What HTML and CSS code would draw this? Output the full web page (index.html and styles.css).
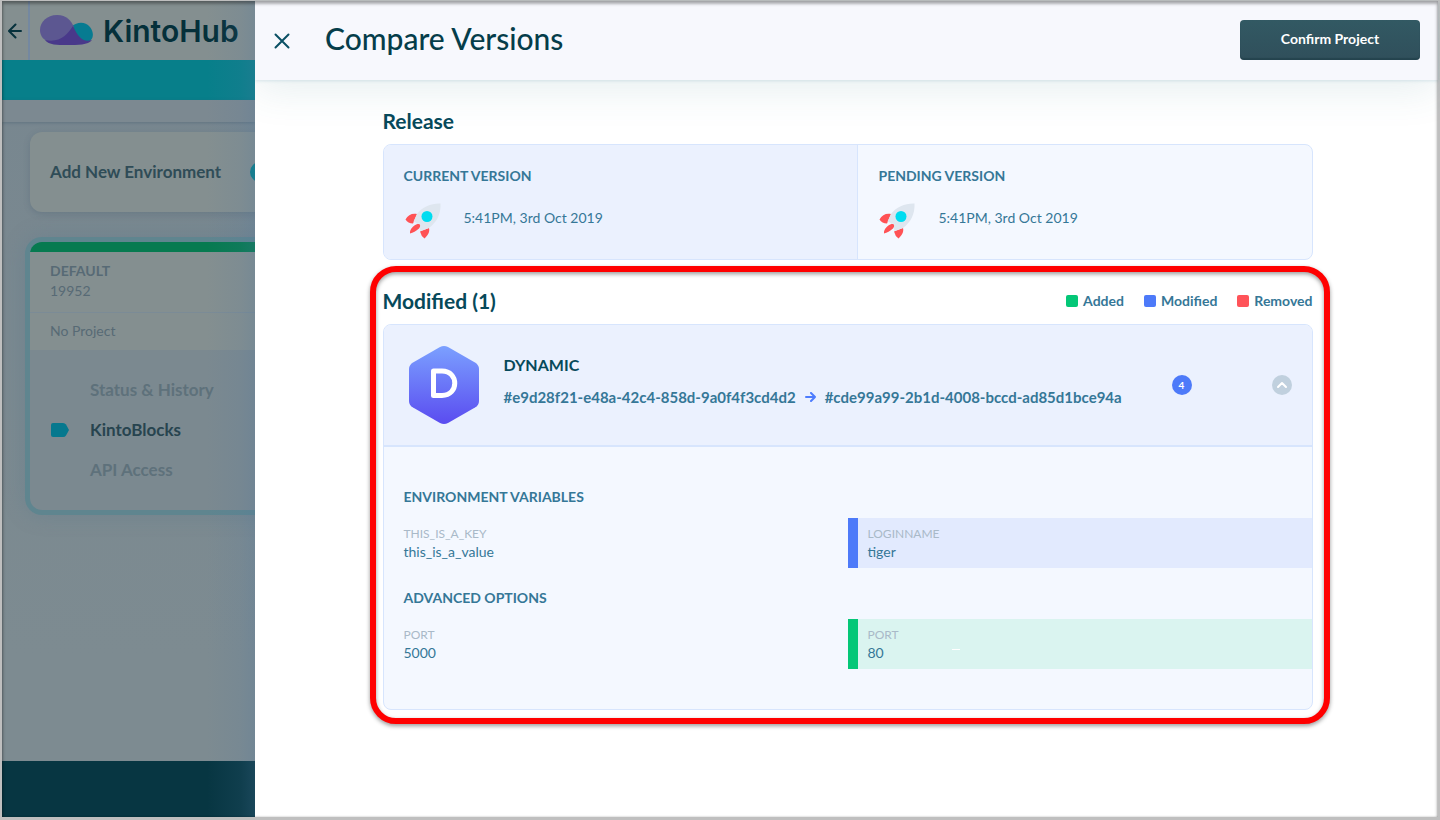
FILE: index.html
```html
<!DOCTYPE html>
<html lang="en">
<head>
<meta charset="utf-8">
<meta name="viewport" content="width=device-width, initial-scale=1">
<title>KintoHub - Compare Versions</title>
<link rel="stylesheet" href="styles.css">
</head>
<body>
<svg class="sprite" aria-hidden="true">
  <symbol id="rocket" viewBox="0 0 40 40">
    <path fill="#ff5255" d="M13 15C8 14 4 16 1.500 20.500Q4 24.500 9 24.500ZM25 29C26 33 24 36 20.500 39.500Q17 37 16 32.500ZM6 34.500C5.500 30 10 26 13.500 25C17 24.500 17 27.500 15 29.500C12 32 9 34 6 34.500Z"/>
    <path fill="#dee6ef" d="M36.500 4.500C28 4 18 8 13 15L9.500 22.500C11.500 23 12.500 24 13.500 25C16 24 17.500 26.500 15.500 29C16 30 16.500 31 16.500 32L25 29C33 23 37 15 36.500 4.500Z"/>
    <circle cx="23" cy="17.500" r="5.500" fill="#00dcf0"/>
  </symbol>
</svg>
<div class="window">
  <div class="app">
    <header class="topbar">
      <button class="back" aria-label="Back">
        <svg width="14" height="16" viewBox="0 0 14 16"><path d="M13 8H1.500M7.500 1.500L1 8l6.500 6.500" fill="none" stroke="currentColor" stroke-width="2" stroke-linecap="round" stroke-linejoin="round"/></svg>
      </button>
      <a class="brand" href="#">
        <svg width="54" height="31" viewBox="0 0 54 31" aria-hidden="true">
          <path fill="#077b91" d="M32 11C37 7 45 6 50 12C55 19 53 25 48 27Q40 31 30 22Z"/>
          <path fill="#5c5791" d="M17 0C27 0 31 6 34 12C29 20 22 27 10 27C4 26 0 21 0 15C0 7 7 0 17 0Z"/>
          <path fill="#49398a" d="M5 25C20 28 27 20 33 11C38 22 43 28 52 25C48 30 38 30 27 30C17 30 9 30 5 25Z"/>
        </svg>
        <span>KintoHub</span>
      </a>
    </header>
    <div class="band"></div>
    <div class="strip"></div>
    <main class="side">
      <button class="add-card"><span>Add New Environment</span><i class="add-dot"></i></button>
      <section class="env">
        <div class="env-info"><strong>DEFAULT</strong><span>19952</span></div>
        <div class="env-project">No Project</div>
        <nav class="env-nav">
          <a href="#">Status &amp; History</a>
          <a href="#" class="active"><svg width="18" height="14" viewBox="0 0 18 14" aria-hidden="true"><path fill="#06788e" d="M2 0H12Q14 0 15 1.500L18 7L15 12.500Q14 14 12 14H2Q0 14 0 12V2Q0 0 2 0Z"/></svg>KintoBlocks</a>
          <a href="#">API Access</a>
        </nav>
      </section>
    </main>
    <footer class="footer"></footer>
  </div>

  <div class="drawer" role="dialog" aria-labelledby="title">
    <header class="drawer-head">
      <button class="close" aria-label="Close">
        <svg width="16" height="16" viewBox="0 0 16 16"><path d="M1.500 1.500l13 13M14.500 1.500l-13 13" fill="none" stroke="currentColor" stroke-width="2" stroke-linecap="round"/></svg>
      </button>
      <h1 id="title">Compare Versions</h1>
      <button class="confirm">Confirm Project</button>
    </header>
    <div class="content">
      <section>
        <div class="section-head"><h2>Release</h2></div>
        <div class="release">
          <div class="version current">
            <h3>CURRENT VERSION</h3>
            <p><svg width="40" height="40" aria-hidden="true"><use href="#rocket"/></svg><span>5:41PM, 3rd Oct 2019</span></p>
          </div>
          <div class="version">
            <h3>PENDING VERSION</h3>
            <p><svg width="40" height="40" aria-hidden="true"><use href="#rocket"/></svg><span>5:41PM, 3rd Oct 2019</span></p>
          </div>
        </div>
      </section>

      <section class="modified">
        <div class="section-head">
          <h2>Modified (1)</h2>
          <ul class="legend">
            <li class="added">Added</li>
            <li class="changed">Modified</li>
            <li class="removed">Removed</li>
          </ul>
        </div>
        <article class="block">
          <header class="block-head">
            <svg class="hex" width="70" height="78" viewBox="0 0 70 78" role="img" aria-label="D">
              <defs><linearGradient id="hexfill" x1="0" y1="0" x2="0" y2="1"><stop offset="0" stop-color="#7ba0ff"/><stop offset="1" stop-color="#5a4cf0"/></linearGradient></defs>
              <path fill="url(#hexfill)" d="M31 1Q35-1 39 1L66 16.500Q70 19 70 23V55Q70 59 66 61.500L39 77Q35 79 31 77L4 61.500Q0 59 0 55V23Q0 19 4 16.500Z"/>
              <path fill="none" stroke="#fff" stroke-width="5" stroke-linejoin="round" d="M24.500 25H33C50 25 50 49.500 33 49.500H24.500Z"/>
            </svg>
            <div class="block-title">
              <h3>DYNAMIC</h3>
              <p>
                <span>#e9d28f21-e48a-42c4-858d-9a0f4f3cd4d2</span>
                <svg width="11" height="10" viewBox="0 0 11 10" aria-label="to"><path d="M1 5h9M6 1l4 4-4 4" fill="none" stroke="#4d7cfe" stroke-width="2" stroke-linecap="round" stroke-linejoin="round"/></svg>
                <span>#cde99a99-2b1d-4008-bccd-ad85d1bce94a</span>
              </p>
            </div>
            <span class="count">4</span>
            <button class="toggle" aria-label="Collapse">
              <svg width="12" height="8" viewBox="0 0 12 8"><path d="M2 6l4-4 4 4" fill="none" stroke="#fff" stroke-width="2" stroke-linecap="round" stroke-linejoin="round"/></svg>
            </button>
          </header>
          <div class="block-body">
            <section>
              <h4>ENVIRONMENT VARIABLES</h4>
              <div class="diff">
                <dl><dt>THIS_IS_A_KEY</dt><dd>this_is_a_value</dd></dl>
                <dl class="is-changed"><dt>LOGINNAME</dt><dd>tiger</dd></dl>
              </div>
            </section>
            <section>
              <h4>ADVANCED OPTIONS</h4>
              <div class="diff">
                <dl><dt>PORT</dt><dd>5000</dd></dl>
                <dl class="is-added"><dt>PORT</dt><dd>80</dd></dl>
              </div>
            </section>
          </div>
        </article>
      </section>
    </div>
  </div>
</div>
</body>
</html>
```
FILE: styles.css
```css
* { box-sizing: border-box; }
body, h1, h2, h3, h4, p, ul, dl, dd { margin: 0; padding: 0; }
body {
  font-family: Lato, "Open Sans", sans-serif;
  font-size: 14px;
  line-height: 20px;
  color: #357797;
}
button { font: inherit; border: 0; padding: 0; background: none; cursor: pointer; }
a { color: inherit; text-decoration: none; }
svg { display: block; flex: none; }
.sprite { position: absolute; width: 0; height: 0; }

.window {
  position: relative;
  display: grid;
  grid-template-columns: 253px minmax(0, 1fr);
  min-height: 100vh;
  border: solid #bfbfbf;
  border-width: 1px 2px 3px;
}
.window::after {
  content: "";
  position: absolute;
  inset: 0;
  pointer-events: none;
  box-shadow: inset 0 2px 3px 1px rgba(0, 0, 0, .3), inset 0 0 2px rgba(0, 0, 0, .2);
}

/* Dimmed application behind the drawer */
.app {
  position: relative;
  display: flex;
  flex-direction: column;
  overflow: hidden;
  background: linear-gradient(#77868f, #7d8b91 80%);
}
.app::after {
  content: "";
  position: absolute;
  inset: 0 0 0 auto;
  width: 48px;
  pointer-events: none;
  background: linear-gradient(90deg, rgba(80, 120, 160, 0), rgba(80, 120, 160, .12) 70%, rgba(80, 120, 160, .25));
}
.topbar { display: flex; height: 59px; background: #848f90; }
.back {
  display: flex;
  align-items: center;
  justify-content: center;
  width: 28px;
  border-right: 2px solid #7488a0;
  color: #07323d;
}
.brand {
  display: flex;
  align-items: center;
  gap: 9px;
  padding-left: 10px;
  font: 600 30px/40px Inter, sans-serif;
  color: #05303a;
}
.band { height: 40px; background: #077f8a; }
.strip { height: 22px; background: #7c8991; box-shadow: 0 1px 3px rgba(60, 85, 105, .4); }
.side { flex: 1; padding: 10px 0 40px 28px; }
.add-card {
  display: flex;
  align-items: center;
  justify-content: space-between;
  width: 300px;
  height: 80px;
  padding: 0 60px 0 20px;
  border-radius: 12px;
  background: #848f90;
  box-shadow: 0 2px 6px rgba(70, 90, 110, .3);
  font-size: 17px;
  font-weight: 700;
  color: #2f4c57;
}
.add-dot { width: 20px; height: 20px; border-radius: 50%; background: #077f8a; }
.env {
  width: 300px;
  margin-top: 30px;
  border-radius: 12px;
  border-top: 10px solid #067a50;
  background: #7b8990;
  box-shadow: 0 0 0 5px #5f858f, 0 0 20px 6px rgba(90, 120, 140, .3);
}
.env-info {
  display: flex;
  flex-direction: column;
  height: 61px;
  padding: 9px 20px;
  background: #848f90;
  border-bottom: 1px solid #7b8b96;
  color: #576a75;
}
.env-project { padding: 8px 20px 9px; background: #848f90; color: #576a75; }
.env-nav { display: grid; gap: 20px; padding: 30px 20px; font-size: 17px; font-weight: 700; color: #5e717b; }
.env-nav a { display: flex; align-items: center; padding-left: 40px; }
.env-nav .active { padding-left: 1px; gap: 21px; color: #27444f; }
.footer { height: 56px; background: #073642; }

/* Drawer */
.drawer { display: flex; flex-direction: column; background: #fff; }
.drawer-head {
  display: flex;
  align-items: center;
  min-height: 79px;
  padding: 0 18px 2px;
  background: #f7f8fd;
  box-shadow: 0 1px 3px rgba(90, 150, 170, .2), 0 10px 40px rgba(60, 120, 130, .12);
}
.close { width: 18px; padding: 3px 1px 1px; color: #0a5064; }
.drawer-head h1 {
  margin: 0 auto 0 34px;
  padding-bottom: 3px;
  font-size: 30px;
  line-height: 40px;
  font-weight: 500;
  color: #053d4a;
}
.confirm {
  width: 180px;
  height: 40px;
  padding-bottom: 2px;
  border-radius: 4px;
  background: linear-gradient(#325963, #304f5b);
  box-shadow: inset 0 -2px 1px rgba(20, 50, 60, .4);
  font-weight: 700;
  color: #fff;
}
.content { width: 932px; max-width: 100%; margin: 0 auto; padding: 26px 0 0 2px; }
.section-head {
  display: flex;
  align-items: center;
  justify-content: space-between;
  height: 30px;
  margin-bottom: 8px;
}
h2 { font-size: 21px; line-height: 30px; color: #06495a; }
h3, h4 { font-size: 14px; line-height: 22px; font-weight: 700; }
.release {
  display: grid;
  grid-template-columns: 476fr 454fr;
  border: 1px solid #d7e5fd;
  border-radius: 8px;
  overflow: hidden;
  background: #f4f8ff;
}
.version { padding: 20px; }
.version.current { background: #ebf1fe; border-right: 1px solid #d7e5fd; }
.version p { display: flex; align-items: center; gap: 20px; height: 40px; margin-top: 12px; }
.version p span { padding-bottom: 3px; }

.modified { position: relative; margin-top: 26px; }
/* Highlight drawn over the page around the section */
.modified::after {
  content: "";
  position: absolute;
  inset: -20px -17px -14px -13px;
  border: 6px solid #f00;
  border-radius: 26px;
  pointer-events: none;
  filter: drop-shadow(0 2px 2px rgba(0, 0, 0, .4));
}
.legend { display: flex; gap: 20px; list-style: none; font-weight: 700; }
.legend li { display: flex; align-items: center; gap: 5px; }
.legend li::before { content: ""; width: 12px; height: 12px; border-radius: 2px; background: currentColor; }
.legend .added::before { background: #04c777; }
.legend .changed::before { background: #4d7af9; }
.legend .removed::before { background: #ff5359; }

.block { border: 1px solid #d7e5fd; border-radius: 8px; overflow: hidden; background: #f4f8ff; }
.block-head {
  display: flex;
  align-items: center;
  min-height: 122px;
  padding: 0 20px 0 25px;
  background: #ebf1fe;
  border-bottom: 2px solid #d7e5fd;
}
.block-title { margin: 0 auto 0 25px; padding-bottom: 10px; }
.block-title h3 { font-size: 16px; color: #06495a; }
.block-title p {
  display: flex;
  align-items: center;
  gap: 9px;
  margin-top: 11px;
  font-size: 15px;
  font-weight: 700;
}
.count {
  width: 20px;
  border-radius: 50%;
  background: #4d7af9;
  color: #fff;
  text-align: center;
  font-size: 10px;
  font-weight: 700;
}
.toggle {
  display: flex;
  align-items: center;
  justify-content: center;
  width: 20px;
  height: 20px;
  margin-left: 80px;
  border-radius: 50%;
  background: #c0d0de;
}
.block-body { display: grid; gap: 20px; padding: 39px 0 40px; }
h4 { padding: 0 20px; }
.diff { display: grid; grid-template-columns: 1fr 1fr; margin-top: 10px; }
.block-body section + section { margin-top: -1px; }
.diff dl { padding: 7px 20px; line-height: 18px; }
.diff dt { font-size: 12px; color: #a9b9c8; }
.diff .is-changed, .diff .is-added { padding-left: 10px; border-left: 10px solid #4d7af9; background: #e2eafe; }
.diff .is-added { position: relative; border-color: #04c777; background: #daf4f0; }
.is-added::after {
  content: "";
  position: absolute;
  top: 30px;
  left: 94px;
  width: 8px;
  height: 1px;
  background: #fff;
}
```
